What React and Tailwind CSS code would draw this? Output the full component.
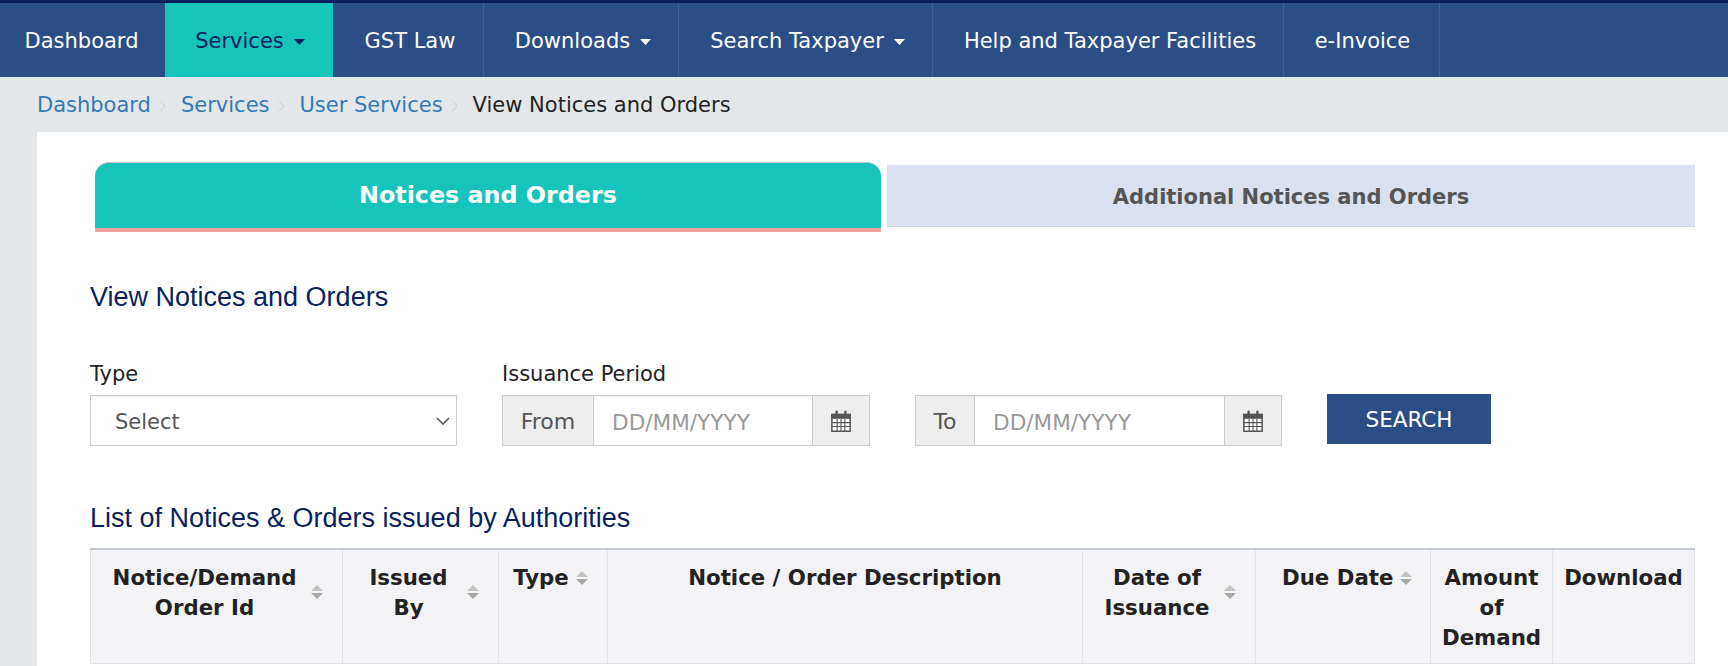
import React from "react";

const verdana = "font-['DejaVu_Sans',sans-serif]";

const navItems = [
  { label: "Dashboard", w: "w-[165px]", border: "", pad: "pr-[2px]" },
  { label: "Services", w: "w-[168px]", caret: true, active: true, pad: "pl-[2px]" },
  { label: "GST Law", w: "w-[151px]", border: "border-r", pad: "pl-[4px]" },
  { label: "Downloads", w: "w-[195px]", caret: true, border: "border-r", pad: "pl-[4px]" },
  { label: "Search Taxpayer", w: "w-[254px]", caret: true, border: "border-r", pad: "pl-[4px]" },
  { label: "Help and Taxpayer Facilities", w: "w-[351px]", border: "border-r", pad: "pl-[4px]" },
  { label: "e-Invoice", w: "w-[156px]", border: "border-r", pad: "pl-[2px]" },
];

const Caret = () => (
  <svg width="11" height="6" viewBox="0 0 11 6">
    <path d="M0 0h11L5.5 6z" fill="currentColor" />
  </svg>
);

const Sort = ({ className = "" }) => (
  <svg width="12" height="14" viewBox="0 0 12 14" className={"shrink-0 " + className}>
    <path d="M6 0L12 6H0z" fill="#c4c4c4" />
    <path d="M6 14L0 8h12z" fill="#a8a8a8" />
  </svg>
);

const Calendar = () => (
  <svg width="20" height="22" viewBox="0 0 18 20">
    <path d="M.7 4h16.6v15.3H.7z" fill="#fff" stroke="#555" strokeWidth="1.4" />
    <path d="M0 3.5h18V8H0z" fill="#555" />
    <path d="M5 1.5v4M13 1.5v4" stroke="#555" strokeWidth="2.2" strokeLinecap="round" />
    <path d="M5.5 8v11M9 8v11M12.5 8v11M1 11.5h16M1 15h16" stroke="#555" strokeWidth="1" />
  </svg>
);

const Chevron = () => (
  <svg width="7" height="14" viewBox="0 0 7 14" className="ml-[8px] mr-[15px]">
    <path d="M1 1.5L6 7l-5 5.5" fill="none" stroke="#ccc" strokeWidth="1" />
  </svg>
);

const DateGroup = ({ label, w, inputW }) => (
  <div className={"flex h-[51px] border border-[#ccc] " + w}>
    <span className="flex items-center justify-center flex-1 pt-[2px] bg-[#eee] text-[#555] text-[22px]">{label}</span>
    <input
      placeholder="DD/MM/YYYY"
      className={"h-full px-[18px] pt-[3px] bg-white border-x border-[#ccc] outline-none text-[21.6px] text-[#555] placeholder:text-[#999] shadow-[inset_0_1px_1px_rgba(0,0,0,0.075)] " + inputW}
    />
    <span className="flex items-center justify-center w-[56px] bg-[#eee]">
      <Calendar />
    </span>
  </div>
);

// sortable headers keep the icon at the right edge, the text centres in what is left
const Th = ({ w, sort, top, pad = "pl-[14px]", children }) => (
  <th className={"border-r border-[#dfe2e6] align-top p-0 last:border-r-0 " + w}>
    {sort ? (
      <div className={"flex gap-[7px] pr-[19px] pt-[13px] " + pad + " " + (top ? "items-start" : "items-center")}>
        <span className="flex-1 text-center leading-[30px] whitespace-nowrap">{children}</span>
        <Sort className={top ? "mt-[8px]" : "-mt-[2px]"} />
      </div>
    ) : (
      <div className="pt-[13px] text-center leading-[30px]">{children}</div>
    )}
  </th>
);

export default function App() {
  return (
    <div className={"h-screen overflow-hidden flex flex-col bg-[#e4e7ea] " + verdana}>
      <nav className="flex h-[77px] shrink-0 border-t-[3px] border-[#0b1f5e] bg-[#2c4e86] text-white text-[21px]">
        {navItems.map((item) => (
          <div
            key={item.label}
            className={
              "flex items-center justify-center gap-[10px] pt-[4px] border-[#3f5f92] " +
              item.w + " " + (item.border || "") + " " + (item.pad || "") + " " +
              (item.active ? "bg-[#17c4bb] text-[#0b1f5e]" : "")
            }
          >
            <span>{item.label}</span>
            {item.caret && <Caret />}
          </div>
        ))}
      </nav>

      <div className="flex items-center h-[55px] shrink-0 pl-[37px] pt-[2px] text-[21px] text-[#337ab7]">
        <span>Dashboard</span>
        <Chevron />
        <span>Services</span>
        <Chevron />
        <span>User Services</span>
        <Chevron />
        <span className="text-[#222]">View Notices and Orders</span>
      </div>

      <main className="flex-1 ml-[37px] bg-white pl-[53px] pr-[33px] min-h-0">
        <div className="flex items-start ml-[5px] pt-[30px] h-[100px]">
          <div className="flex items-center justify-center w-[786px] h-[70px] rounded-t-[14px] bg-[#17c4bb] border-t border-[#ccc] border-b-[4px] border-b-[#f0a39b] text-white font-bold text-[23.8px]">
            Notices and Orders
          </div>
          <div className="flex items-center justify-center flex-1 ml-[6px] mt-[3px] h-[62px] pt-[4px] bg-[#dbe1ee] border-b border-[#d3d8e0] text-[#555] font-bold text-[21px]">
            Additional Notices and Orders
          </div>
        </div>

        <h2 className="mt-[50px] font-['Liberation_Sans',sans-serif] text-[27px] leading-[30px] text-[#0b1f5e]">
          View Notices and Orders
        </h2>

        <div className="flex items-start mt-[46px]">
          <div className="w-[367px]">
            <label className="block h-[37px] text-[21px] leading-[32px] text-[#222]">Type</label>
            <div className="relative">
              <select className="w-full h-[51px] pl-[24px] pr-[10px] pt-[4px] appearance-none bg-white border border-[#ccc] text-[21px] text-[#555] outline-none shadow-[inset_0_1px_1px_rgba(0,0,0,0.075)]">
                <option>Select</option>
              </select>
              <svg width="14" height="8" viewBox="0 0 14 8" className="absolute right-[7px] top-[22px]">
                <path d="M1 1l6 6 6-6" fill="none" stroke="#555" strokeWidth="1.6" />
              </svg>
            </div>
          </div>
          <div className="ml-[45px]">
            <label className="block h-[37px] text-[21px] leading-[32px] text-[#222]">Issuance Period</label>
            <DateGroup label="From" w="w-[368px]" inputW="w-[220px]" />
          </div>
          <div className="ml-[45px] pt-[37px]">
            <DateGroup label="To" w="w-[367px]" inputW="w-[251px]" />
          </div>
          <button className="ml-[45px] mt-[36px] w-[164px] h-[50px] pt-[2px] bg-[#2c4e86] text-white text-[21.5px]">SEARCH</button>
        </div>

        <h2 className="mt-[57px] font-['Liberation_Sans',sans-serif] text-[27px] leading-[30px] text-[#0b1f5e]">
          List of Notices &amp; Orders issued by Authorities
        </h2>

        <table className="mt-[15px] w-[1604px] table-fixed border-collapse bg-[#f3f3f6] border border-[#dfe2e6] border-t-2 border-t-[#c3cad4] text-[21.3px] text-[#222] font-bold h-[116px]">
          <thead>
            <tr>
              <Th w="w-[252px]" sort>Notice/Demand<br />Order Id</Th>
              <Th w="w-[156px]" sort>Issued<br />By</Th>
              <Th w="w-[109px]" sort top>Type</Th>
              <Th w="w-[475px]">Notice / Order Description</Th>
              <Th w="w-[173px]" sort>Date of<br />Issuance</Th>
              <Th w="w-[175px]" sort top pad="pl-[26px]">Due Date</Th>
              <Th w="w-[122px]">Amount<br />of<br />Demand</Th>
              <Th w="w-[142px]">Download</Th>
            </tr>
          </thead>
        </table>
      </main>
    </div>
  );
}
